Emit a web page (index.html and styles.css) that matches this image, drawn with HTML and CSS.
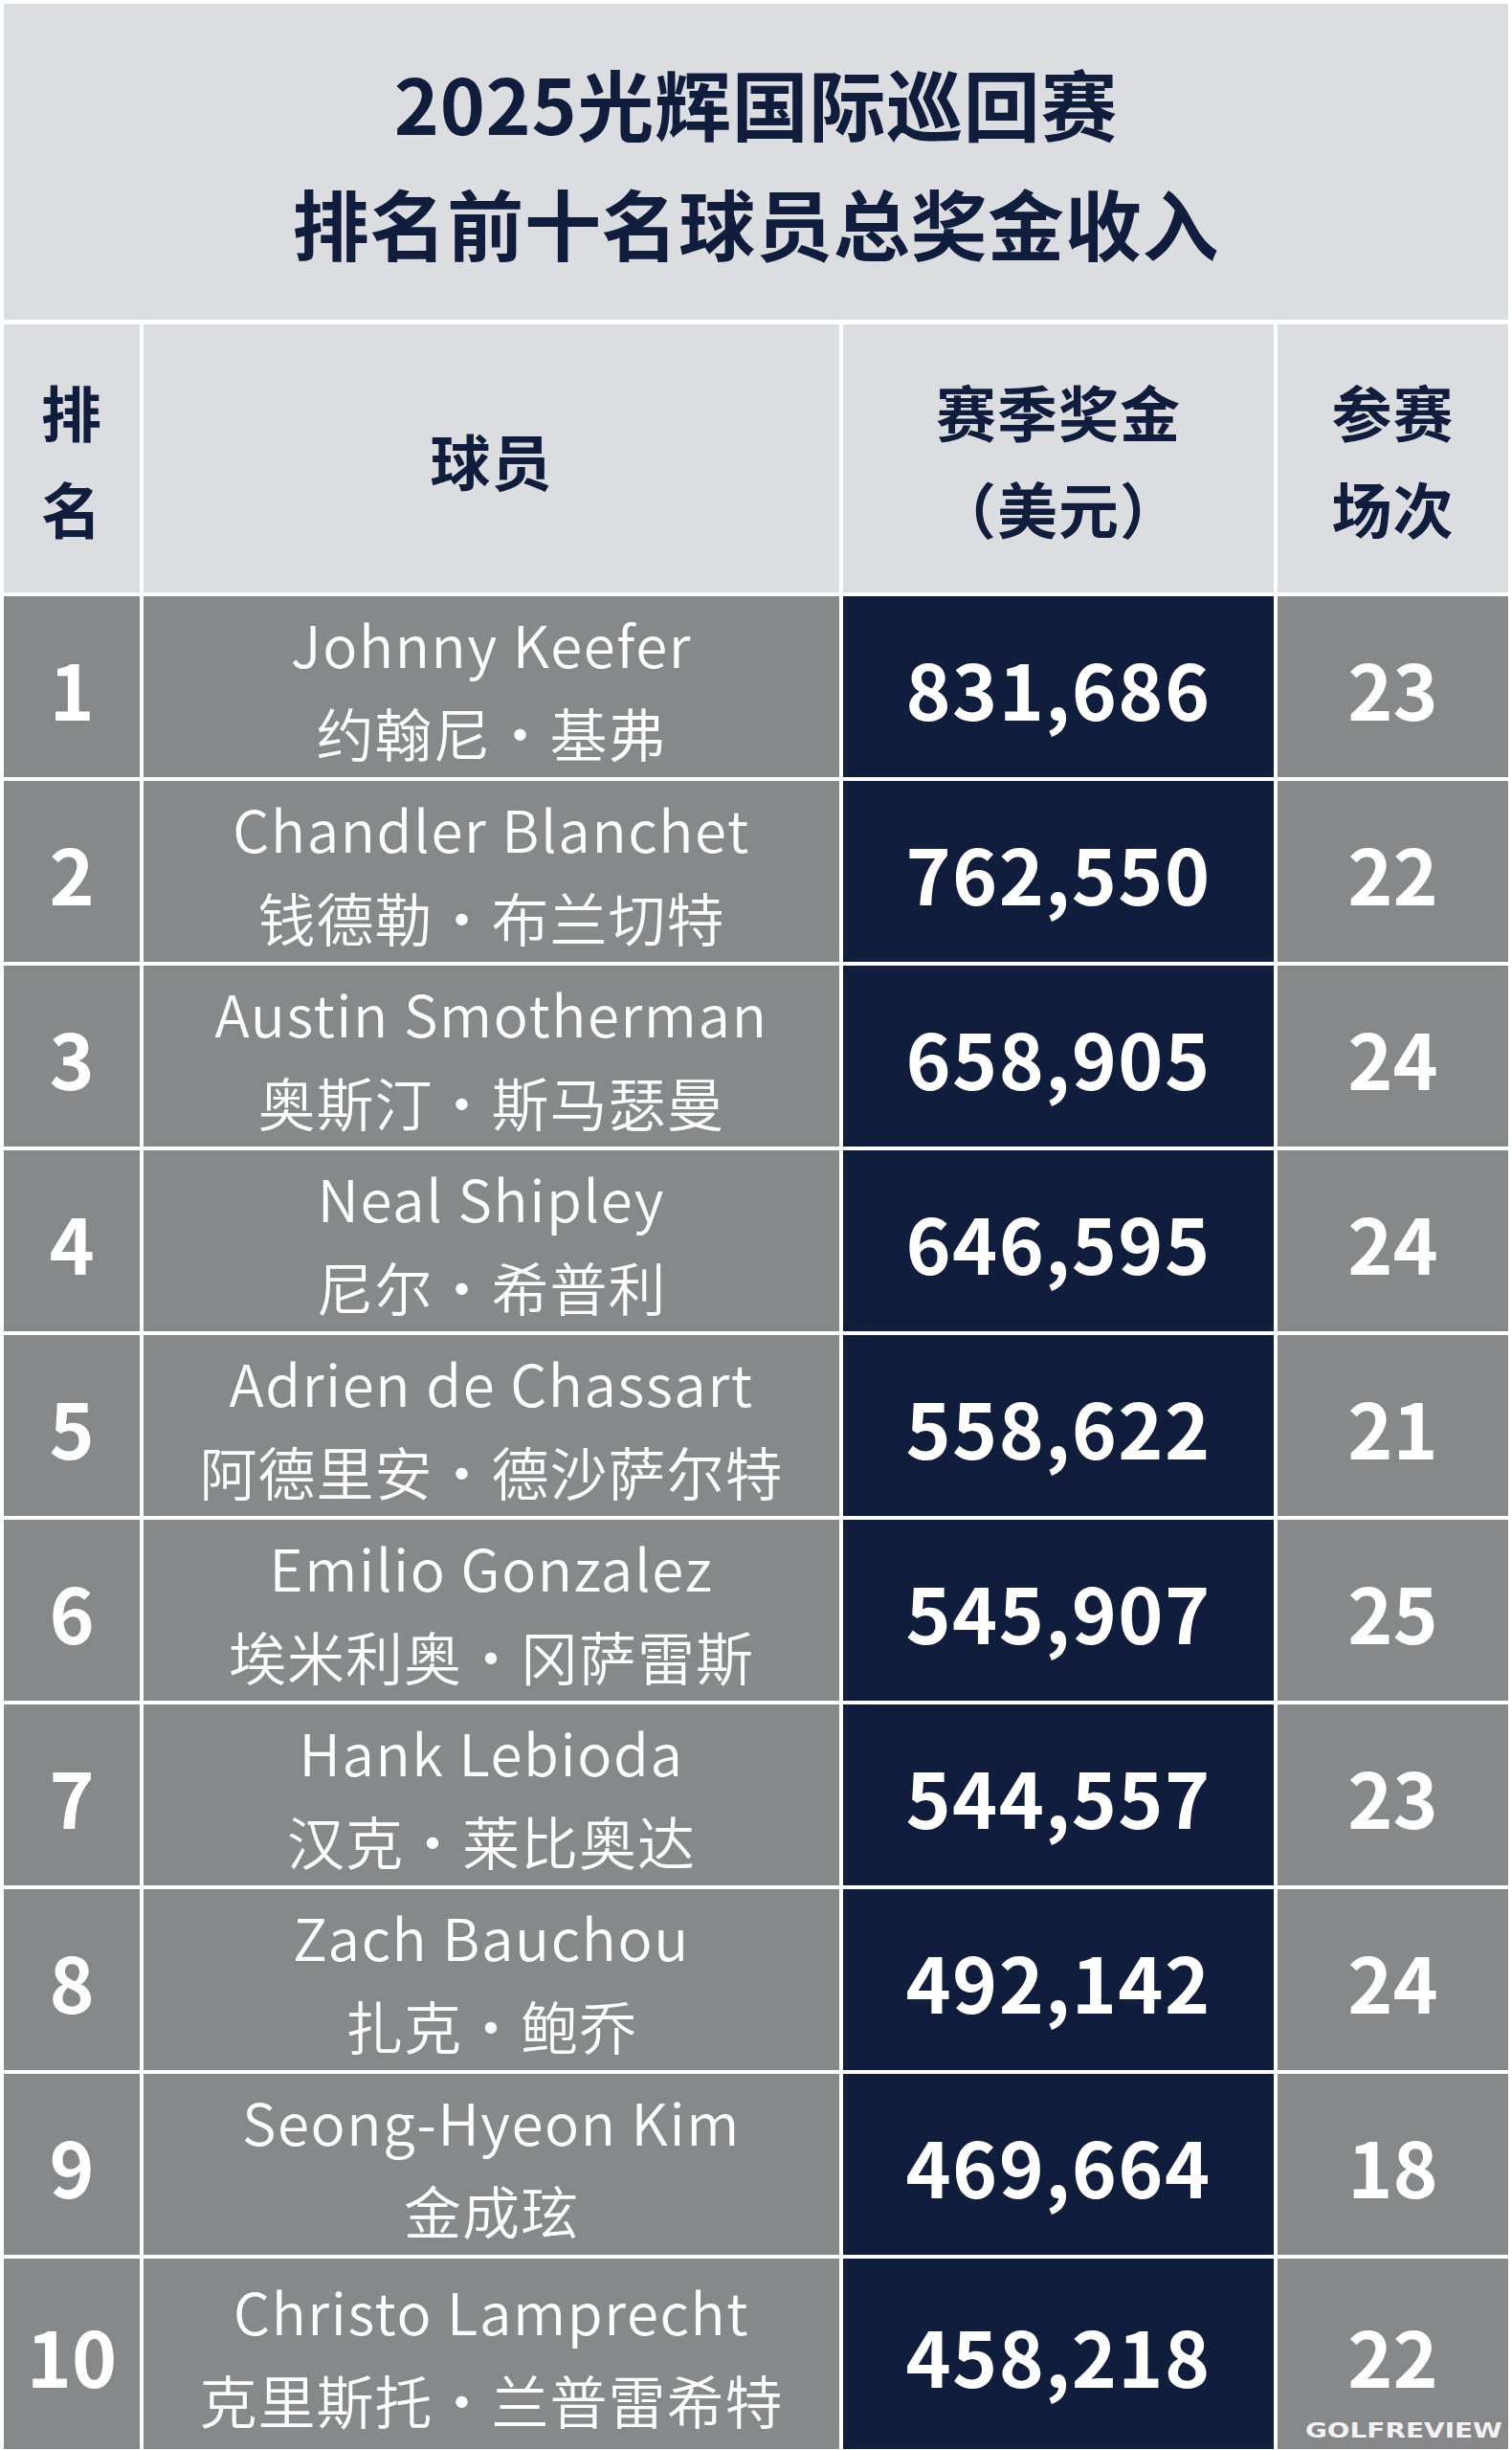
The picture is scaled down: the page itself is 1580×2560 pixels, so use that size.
FILE: index.html
```html
<!DOCTYPE html>
<html lang="zh-CN">
<head>
<meta charset="utf-8">
<title>2025光辉国际巡回赛 排名前十名球员总奖金收入</title>
<link rel="stylesheet" href="styles.css">
</head>
<body>
<div class="board">
  <div class="title">
    <div>2025光辉国际巡回赛</div>
    <div>排名前十名球员总奖金收入</div>
  </div>

  <div class="head rank-h"><span>排</span><span>名</span></div>
  <div class="head"><span>球员</span></div>
  <div class="head"><span>赛季奖金</span><span>（美元）</span></div>
  <div class="head"><span>参赛</span><span>场次</span></div>

  <div class="cell rank">1</div>
  <div class="cell name"><span class="en">Johnny Keefer</span><span class="zh">约翰尼・基弗</span></div>
  <div class="cell prize">831,686</div>
  <div class="cell events">23</div>

  <div class="cell rank">2</div>
  <div class="cell name"><span class="en">Chandler Blanchet</span><span class="zh">钱德勒・布兰切特</span></div>
  <div class="cell prize">762,550</div>
  <div class="cell events">22</div>

  <div class="cell rank">3</div>
  <div class="cell name"><span class="en">Austin Smotherman</span><span class="zh">奥斯汀・斯马瑟曼</span></div>
  <div class="cell prize">658,905</div>
  <div class="cell events">24</div>

  <div class="cell rank">4</div>
  <div class="cell name"><span class="en">Neal Shipley</span><span class="zh">尼尔・希普利</span></div>
  <div class="cell prize">646,595</div>
  <div class="cell events">24</div>

  <div class="cell rank">5</div>
  <div class="cell name"><span class="en">Adrien de Chassart</span><span class="zh">阿德里安・德沙萨尔特</span></div>
  <div class="cell prize">558,622</div>
  <div class="cell events">21</div>

  <div class="cell rank">6</div>
  <div class="cell name"><span class="en">Emilio Gonzalez</span><span class="zh">埃米利奥・冈萨雷斯</span></div>
  <div class="cell prize">545,907</div>
  <div class="cell events">25</div>

  <div class="cell rank">7</div>
  <div class="cell name"><span class="en">Hank Lebioda</span><span class="zh">汉克・莱比奥达</span></div>
  <div class="cell prize">544,557</div>
  <div class="cell events">23</div>

  <div class="cell rank">8</div>
  <div class="cell name"><span class="en">Zach Bauchou</span><span class="zh">扎克・鲍乔</span></div>
  <div class="cell prize">492,142</div>
  <div class="cell events">24</div>

  <div class="cell rank">9</div>
  <div class="cell name"><span class="en">Seong-Hyeon Kim</span><span class="zh">金成玹</span></div>
  <div class="cell prize">469,664</div>
  <div class="cell events">18</div>

  <div class="cell rank">10</div>
  <div class="cell name"><span class="en">Christo Lamprecht</span><span class="zh">克里斯托・兰普雷希特</span></div>
  <div class="cell prize">458,218</div>
  <div class="cell events last">22<span class="mark">GOLFREVIEW</span></div>
</div>
</body>
</html>
```

FILE: styles.css
```css
* { box-sizing: border-box; }

html, body {
  margin: 0;
  padding: 0;
  background: #ffffff;
}

body {
  font-family: "Noto Sans CJK SC", "Noto Sans", sans-serif;
}

.board {
  width: 1580px;
  display: grid;
  grid-template-columns: 142px 727px 450px 241px;
  grid-template-rows: 331px 280px repeat(9, 189px) 199px;
  column-gap: 4px;
  row-gap: 4px;
  padding: 4px 4px 0 4px;
}

.title {
  grid-column: 1 / -1;
  margin-bottom: 1px;
  background: #dcdde1;
  color: #111d3c;
  font-weight: 700;
  font-size: 80px;
  line-height: 125px;
  letter-spacing: 0.7px;
  display: flex;
  flex-direction: column;
  align-items: center;
  justify-content: center;
}

.head {
  background: #dcdde1;
  color: #111d3c;
  font-weight: 700;
  font-size: 63px;
  line-height: 101px;
  letter-spacing: 1px;
  display: flex;
  flex-direction: column;
  align-items: center;
  justify-content: center;
}

.cell {
  background: #87888a;
  color: #ffffff;
  display: flex;
  flex-direction: column;
  align-items: center;
  justify-content: center;
}

.rank, .events, .prize {
  font-weight: 700;
  font-size: 80px;
  line-height: 1;
}

.prize {
  background: #111d3c;
  letter-spacing: 1.4px;
}

.name {
  font-weight: 350;
  font-size: 60px;
  line-height: 93px;
  white-space: nowrap;
}

.name .en {
  letter-spacing: 1.6px;
}

.name .zh {
  letter-spacing: 1px;
}

.last {
  position: relative;
}

.mark {
  position: absolute;
  right: 6px;
  bottom: 8px;
  font-family: "DejaVu Sans", "Liberation Sans", sans-serif;
  font-weight: 700;
  font-size: 21px;
  line-height: 21px;
  color: #f2f2f2;
  transform: scaleX(1.33);
  transform-origin: right bottom;
}
```
